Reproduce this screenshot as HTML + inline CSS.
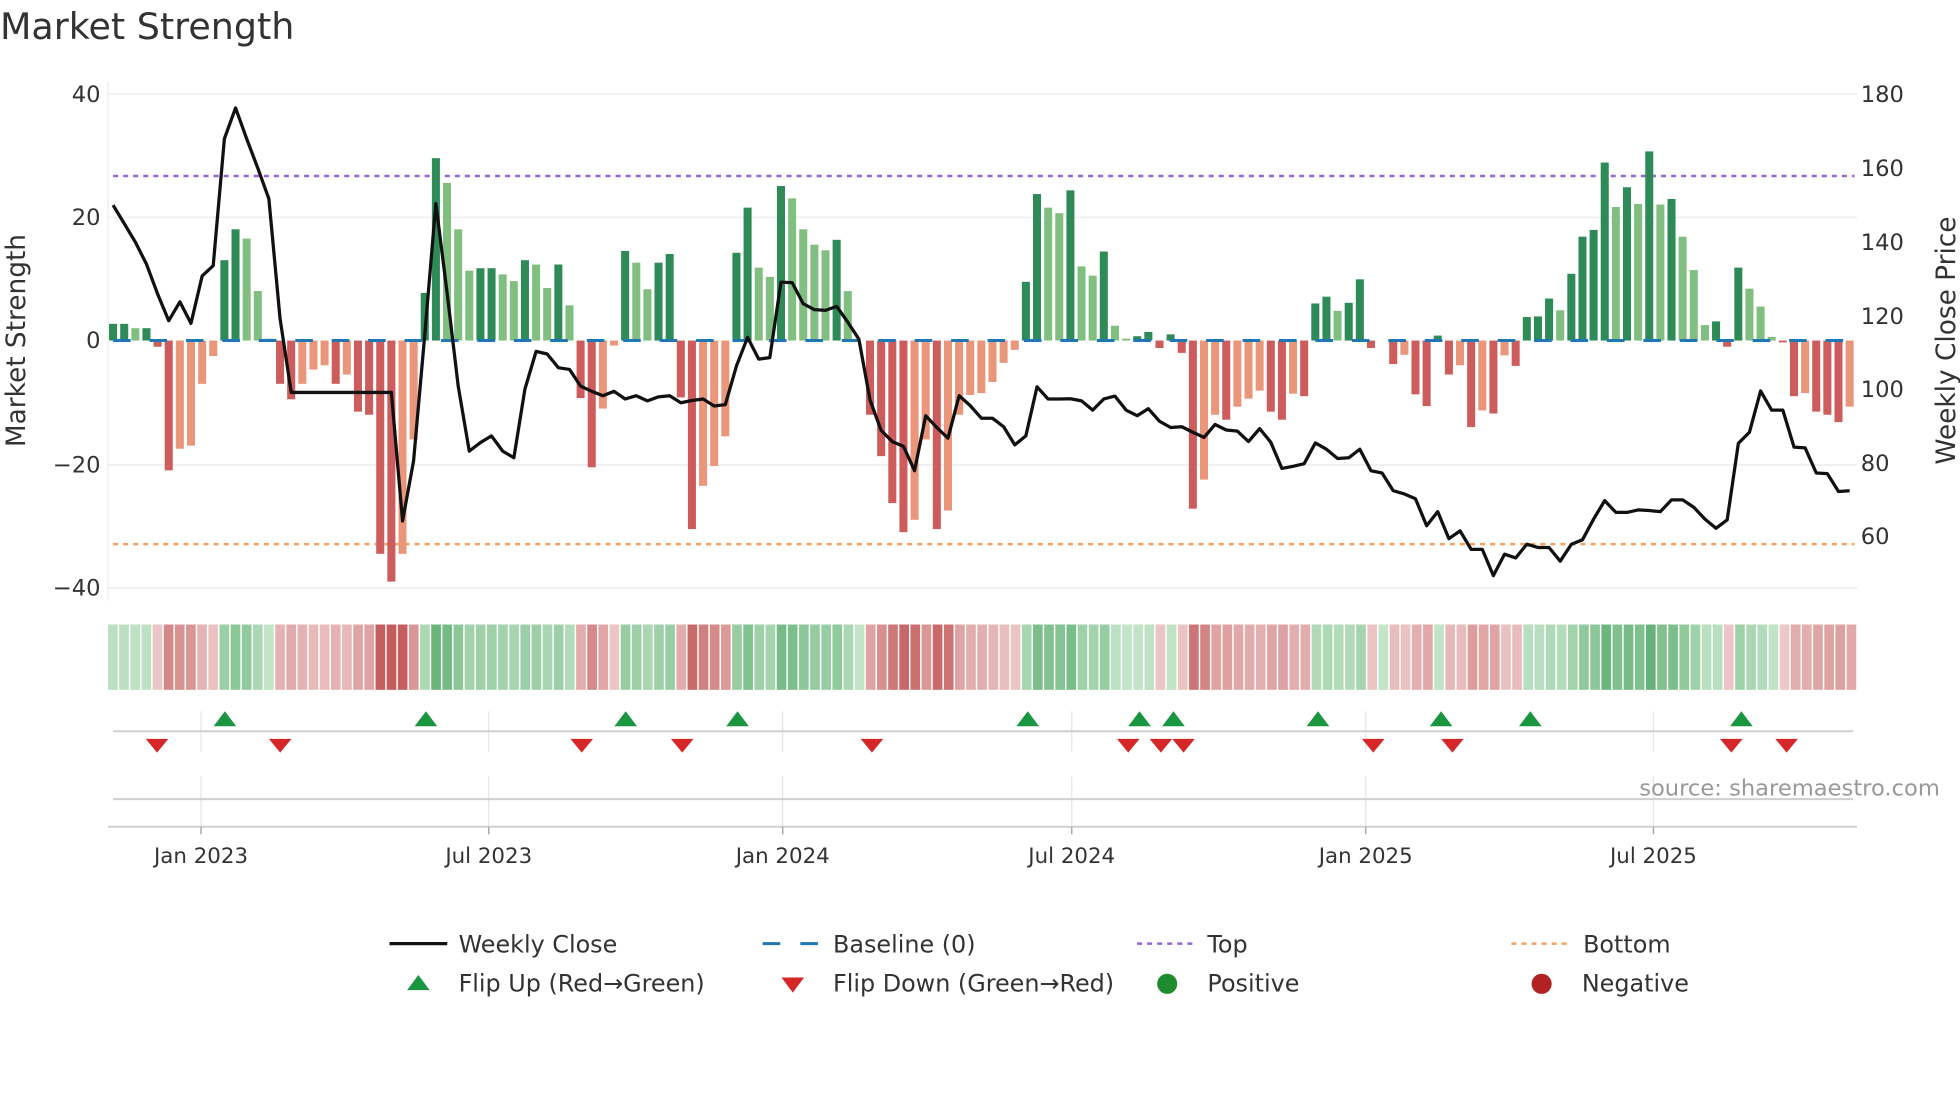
<!DOCTYPE html>
<html><head><meta charset="utf-8"><style>
html,body{margin:0;padding:0;background:#fff;}
svg{display:block;font-family:"DejaVu Sans","Liberation Sans",sans-serif;}
</style></head><body>
<svg id="s" width="1960" height="1102" viewBox="0 0 1560 877" xmlns="http://www.w3.org/2000/svg">
<rect width="1560" height="877" fill="#fff"/>
<text x="0" y="31" font-size="29" fill="#333">Market Strength</text>
<g id="grid" stroke="#eceef3" stroke-width="1.2">
<line x1="86" y1="75" x2="1478" y2="75"/><line x1="86" y1="173" x2="1478" y2="173"/>
<line x1="86" y1="370" x2="1478" y2="370"/><line x1="86" y1="468" x2="1478" y2="468"/>
<line x1="86" y1="65" x2="86" y2="478"/>
</g>
<g font-size="18" fill="#333" text-anchor="end">
<text x="80" y="81">40</text><text x="80" y="179">20</text><text x="80" y="277">0</text>
<text x="80" y="376">−20</text><text x="80" y="474">−40</text>
</g>
<g font-size="18" fill="#333">
<text x="1481" y="81">180</text><text x="1481" y="140">160</text><text x="1481" y="199">140</text>
<text x="1481" y="258">120</text><text x="1481" y="316">100</text><text x="1481" y="375">80</text><text x="1481" y="433">60</text>
</g>
<text transform="translate(20,271) rotate(-90)" text-anchor="middle" font-size="21" fill="#333">Market Strength</text>
<text transform="translate(1556,271) rotate(-90)" text-anchor="middle" font-size="21" fill="#333">Weekly Close Price</text>
<line x1="90" y1="140" x2="1476" y2="140" stroke="#9467d4" stroke-width="2" stroke-dasharray="4 4"/>
<line x1="90" y1="433" x2="1476" y2="433" stroke="#f4a261" stroke-width="2" stroke-dasharray="4 4"/>
<g id="bars"></g>
<line x1="90" y1="271" x2="1476" y2="271" stroke="#1f77b4" stroke-width="2.4" stroke-dasharray="14 15"/>
<polyline id="price" fill="none" stroke="#111" stroke-width="2.6" stroke-linejoin="round"/>
<g id="strip"></g>
<g stroke="#e6e6e6" stroke-width="1">
<line x1="160" y1="566" x2="160" y2="598"/><line x1="389" y1="566" x2="389" y2="598"/><line x1="623" y1="566" x2="623" y2="598"/>
<line x1="853" y1="566" x2="853" y2="598"/><line x1="1087" y1="566" x2="1087" y2="598"/><line x1="1316" y1="566" x2="1316" y2="598"/>
<line x1="160" y1="618" x2="160" y2="658"/><line x1="389" y1="618" x2="389" y2="658"/><line x1="623" y1="618" x2="623" y2="658"/>
<line x1="853" y1="618" x2="853" y2="658"/><line x1="1087" y1="618" x2="1087" y2="658"/><line x1="1316" y1="618" x2="1316" y2="658"/>
</g>
<line x1="90" y1="582" x2="1475" y2="582" stroke="#cfcfcf" stroke-width="1.6"/>
<line x1="90" y1="636" x2="1475" y2="636" stroke="#cfcfcf" stroke-width="1.6"/>
<line x1="86" y1="658" x2="1478" y2="658" stroke="#cfcfcf" stroke-width="1.6"/>
<g stroke="#aaa" stroke-width="1.2">
<line x1="160" y1="658" x2="160" y2="664"/><line x1="389" y1="658" x2="389" y2="664"/><line x1="623" y1="658" x2="623" y2="664"/>
<line x1="853" y1="658" x2="853" y2="664"/><line x1="1087" y1="658" x2="1087" y2="664"/><line x1="1316" y1="658" x2="1316" y2="664"/>
</g>
<g id="marks"></g>
<g font-size="17" fill="#333" text-anchor="middle">
<text x="160" y="687">Jan 2023</text><text x="389" y="687">Jul 2023</text><text x="623" y="687">Jan 2024</text>
<text x="853" y="687">Jul 2024</text><text x="1087" y="687">Jan 2025</text><text x="1316" y="687">Jul 2025</text>
</g>
<text x="1544" y="633" text-anchor="end" font-size="18" fill="#999">source: sharemaestro.com</text>
<g font-size="19" fill="#333">
<line x1="310" y1="751" x2="356" y2="751" stroke="#111" stroke-width="2.6"/>
<text x="365" y="758">Weekly Close</text>
<line x1="607" y1="751" x2="651" y2="751" stroke="#1f77b4" stroke-width="2.4" stroke-dasharray="14 16"/>
<text x="663" y="758">Baseline (0)</text>
<line x1="905" y1="751" x2="949" y2="751" stroke="#9467d4" stroke-width="2" stroke-dasharray="4 4"/>
<text x="961" y="758">Top</text>
<line x1="1203" y1="751" x2="1247" y2="751" stroke="#f4a261" stroke-width="2" stroke-dasharray="4 4"/>
<text x="1260" y="758">Bottom</text>
<polygon points="324,788 342,788 333,776" fill="#1a9641"/>
<text x="365" y="789">Flip Up (Red→Green)</text>
<polygon points="622,778 640,778 631,790" fill="#d62728"/>
<text x="663" y="789">Flip Down (Green→Red)</text>
<circle cx="929" cy="783" r="8" fill="#1e8c2e"/>
<text x="961" y="789">Positive</text>
<circle cx="1227" cy="783" r="8" fill="#b22222"/>
<text x="1259" y="789">Negative</text>
</g>
</svg>
<script>
var B="2.7G 2.7G 2g 2G -1R -21R -17.5r -17r -7r -2.5r 13G 18G 16.5g 8g 0.3g -7R -9.5R -7r -4.7r -4r -7R -5.5r -11.5R -12R -34.5R -39R -34.5r -16r 7.7G 29.5G 25.5g 18g 11.3g 11.7G 11.7G 10.7g 9.6g 13G 12.3g 8.5g 12.3G 5.7g -9.3R -20.5R -11r -0.8r 14.5G 12.6g 8.3g 12.6G 14G -9.2R -30.5R -23.5r -20.3r -15.5r 14.2G 21.5G 11.8g 10.3g 25G 23g 18g 15.5g 14.6g 16.3G 8g 0g -12R -18.7R -26.3R -31R -29r -16r -30.5R -27.5r -12r -8.8r -8.5r -6.7r -3.6r -1.5r 9.5G 23.7G 21.5g 20.6g 24.3G 12g 10.5g 14.4G 2.4g 0.3g 0.7G 1.4G -1.2R 1G -2R -27.2R -22.5r -12r -12.8R -10.7r -9.4r -8.1r -11.5R -12.8R -8.6r -9R 6G 7.1G 4.8g 6.1G 9.9G -1.2R 0g -3.8R -2.3r -8.7R -10.6R 0.8G -5.5R -4r -14R -11.3r -11.8R -2.4r -4.1R 3.8G 3.9G 6.8G 4.9g 10.8G 16.8G 17.9G 28.8G 21.6g 24.8G 22.1g 30.6G 22g 22.9G 16.8g 11.4g 2.5g 3.1G -1R 11.8G 8.4g 5.5g 0.6g -0.3R -9R -8.5r -11.5R -12R -13.2R -10.7r".split(" ");
var P=[150,145,140,134,126,118.7,123.8,118,130.8,133.6,168,176.3,168,160,151.7,119.3,99.3,99.3,99.3,99.3,99.3,99.3,99.3,99.3,99.3,99.3,64.5,80.8,115,150.4,126.4,101,83.4,85.7,87.5,83.4,81.6,100.2,110.4,109.7,106,105.5,101,99.6,98.4,99.6,97.5,98.4,97,98.1,98.4,96.5,97.1,97.5,95.6,96,106.5,114.2,108.3,108.7,129.1,129,123.3,121.7,121.5,122.6,118.3,113.7,97.2,89,86,84.7,78.1,93,89.8,86.9,98.4,95.7,92.3,92.3,90,85.1,87.5,100.8,97.5,97.5,97.6,97,94.5,97.5,98.3,94.5,93,94.9,91.5,89.8,90,88.5,87.1,90.6,89.1,88.8,86,89.5,85.8,78.7,79.3,80,85.6,83.9,81.4,81.6,83.9,78.1,77.5,72.7,71.8,70.5,63.2,67,59.7,61.8,56.8,56.8,49.7,55.5,54.5,58.2,57.3,57.3,53.6,58.2,59.4,65,70,66.8,66.8,67.5,67.3,67,70.2,70.2,68.2,65,62.5,64.8,85.5,88.5,99.7,94.5,94.5,84.5,84.3,77.5,77.3,72.5,72.7];
var C={G:"#2e8b57",g:"#80bf80",R:"#cd5c5c",r:"#e9967a"};
var ns="http://www.w3.org/2000/svg";
function el(t,a,p){var e=document.createElementNS(ns,t);for(var k in a)e.setAttribute(k,a[k]);p.appendChild(e);return e;}
var bars=document.getElementById("bars"),strip=document.getElementById("strip");
function mix(a,b,t){return "rgb("+a.map(function(v,i){return Math.round(v+(b[i]-v)*t)}).join(",")+")";}
for(var i=0;i<B.length;i++){
 var s=B[i],c=s.slice(-1),v=parseFloat(s),x=90+i*8.86;
 var y=271-v*4.92;
 if(Math.abs(v)>0.05) el("rect",{x:x-3.2,y:Math.min(y,271),width:6.4,height:Math.abs(v*4.92),fill:C[c]},bars);
 var t=Math.min(1,Math.abs(v)/35);
 var col=v>=0?mix([214,238,216],[88,172,108],0.15+0.85*t):mix([244,220,220],[196,92,92],0.15+0.85*t);
 el("rect",{x:86+i*8.87,y:497,width:7.7,height:52,fill:col},strip);
}
var pts=P.map(function(p,i){return (90+i*8.86).toFixed(1)+","+(75+(180-p)*2.94).toFixed(1)}).join(" ");
document.getElementById("price").setAttribute("points",pts);
var m=document.getElementById("marks");
[179,339,498,587,818,907,934,1049,1147,1218,1386].forEach(function(x){el("polygon",{points:(x-9)+",578 "+(x+9)+",578 "+x+",566",fill:"#1a9641"},m);});
[125,223,463,543,694,898,924,942,1093,1156,1378,1422].forEach(function(x){el("polygon",{points:(x-9)+",588 "+(x+9)+",588 "+x+",599",fill:"#d62728"},m);});
</script>
</body></html>
